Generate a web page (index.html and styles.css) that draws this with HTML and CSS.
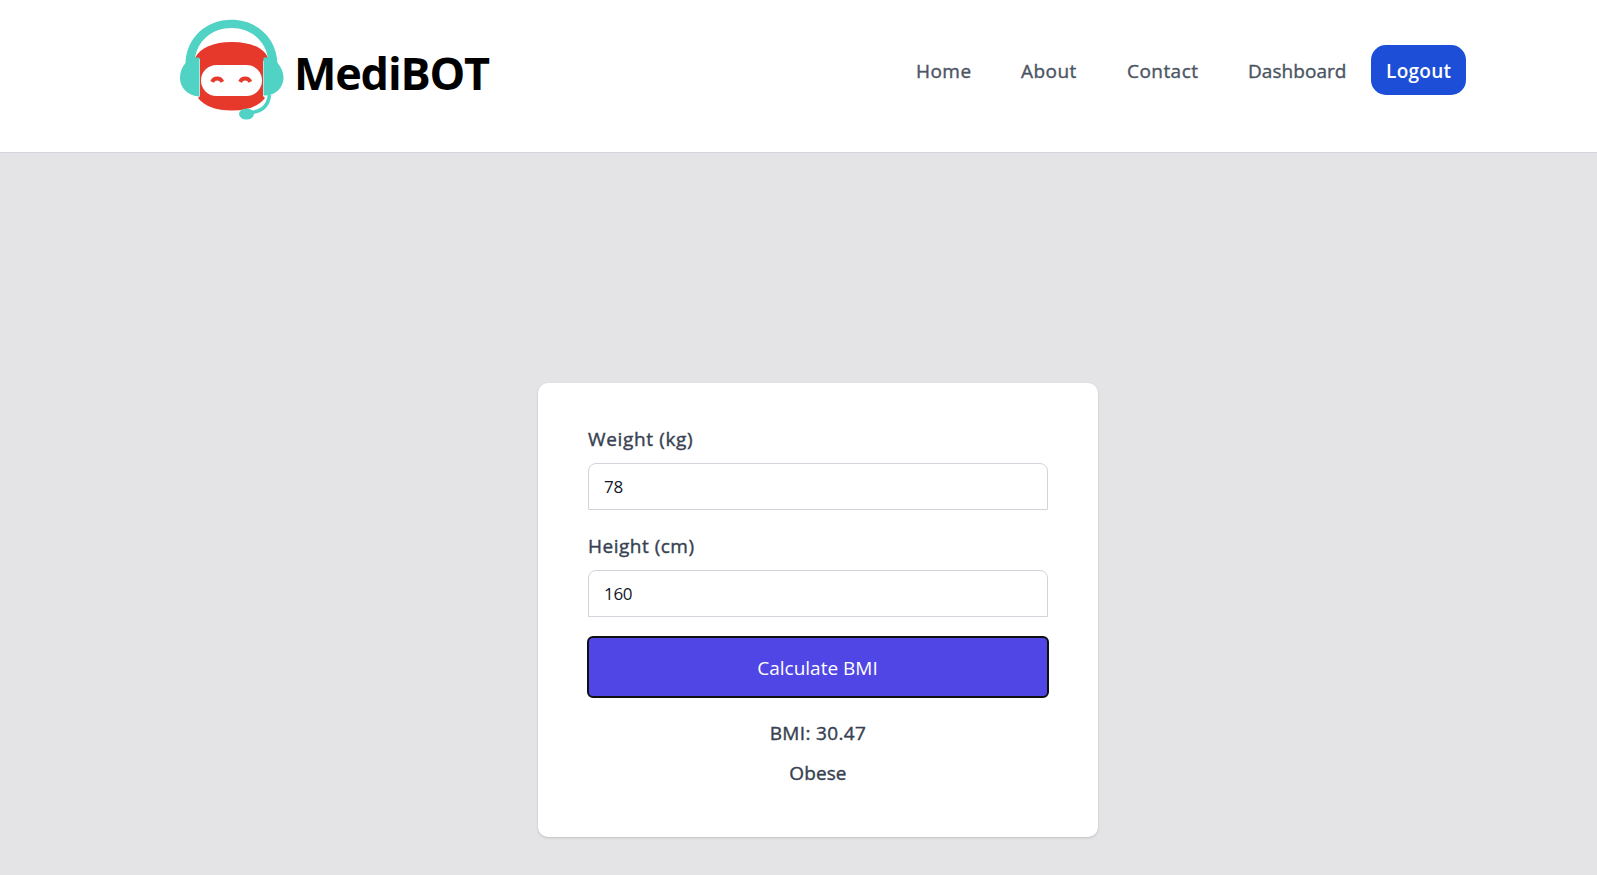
FILE: index.html
```html
<!DOCTYPE html>
<html lang="en">
<head>
<meta charset="utf-8">
<title>MediBOT</title>
<link rel="stylesheet" href="styles.css">
</head>
<body>
<header class="header">
  <a class="brand">
    <svg class="logo" viewBox="0 0 130 120" width="130" height="120" aria-hidden="true">
      <path d="M25 48C30 38 43 32 62 32s32 6 36 16l-5 3v35l2 2C89 96 78 100.500 62 100.500S34 96 28 88l2-2V49z" fill="#e6392c"/>
      <rect x="31" y="55" width="61" height="31" rx="15.500" fill="#fff"/>
      <path d="M42 71.800c2.200-4.400 8.200-4.400 10.400 0M70 71.800c2.200-4.400 8.200-4.400 10.400 0" fill="none" stroke="#e6392c" stroke-width="3.800"/>
      <path d="M15.500 54C16 28 36 9.800 61.500 9.800S107 28 107.500 54L98 49C96 31 81 18 61.500 18S27 31 25 49z" fill="#50d2c4"/>
      <path d="M15.500 53 24 47.500h5.500v39C18 86 10 78 10 68c0-6 2-11 5.500-15zM107.500 53 99 47.500h-5.500v38C105 86 113.500 78 113.500 68c0-6-2.500-11-6-15z" fill="#50d2c4"/>
      <path d="M99.500 85C98 97 91 102 80 102.500" fill="none" stroke="#50d2c4" stroke-width="3.600"/>
      <ellipse cx="76.500" cy="104" rx="7.500" ry="5.500" fill="#50d2c4"/>
    </svg>
    <span class="brand-name">MediBOT</span>
  </a>
  <nav class="nav">
    <a class="link home">Home</a>
    <a class="link about">About</a>
    <a class="link contact">Contact</a>
    <a class="link dashboard">Dashboard</a>
    <a class="logout">Logout</a>
  </nav>
</header>
<main class="main">
  <form class="card">
    <label class="label weight-label" for="weight">Weight (kg)</label>
    <input class="field" id="weight" type="text" value="78">
    <label class="label height-label" for="height">Height (cm)</label>
    <input class="field" id="height" type="text" value="160">
    <button class="calculate" type="button">Calculate BMI</button>
    <p class="result bmi">BMI: 30.47</p>
    <p class="result category">Obese</p>
  </form>
</main>
</body>
</html>
```
FILE: styles.css
```css
* { box-sizing: border-box; }
body {
  margin: 0;
  height: 875px;
  overflow: hidden;
  background: #e4e4e6;
  font: 500 19px/30px "Open Sans", "Noto Sans", sans-serif;
  color: #374151;
}
.header {
  display: flex;
  justify-content: space-between;
  height: 153px;
  padding: 10px 131px 0 170px;
  background: #fff;
  border-bottom: 1px solid #d1d5db;
}
.brand { display: flex; }
.logo { display: block; }
.brand-name {
  margin: 33px 0 0 -6px;
  font-size: 45px;
  font-weight: 700;
  line-height: 60px;
  letter-spacing: -1.2px;
  color: #000;
  white-space: nowrap;
}
.nav {
  display: flex;
  height: 50px;
  margin-top: 35px;
  line-height: 52px;
  color: #4b5563;
  white-space: nowrap;
}
.link {
  margin-right: 50px;
  letter-spacing: .45px;
  -webkit-text-stroke: .4px currentColor;
}
.home { width: 55px; }
.about { width: 56px; }
.contact { width: 71px; }
.dashboard { width: 98px; margin-right: 25px; letter-spacing: .05px; }
.logout {
  width: 95px;
  padding-left: 15px;
  border-radius: 15px;
  background: #1d4ed8;
  color: #fff;
  font-weight: 600;
  letter-spacing: .3px;
}
.main { padding-top: 230px; }
.card {
  display: flex;
  flex-direction: column;
  width: 560px;
  height: 454px;
  margin-left: 538px;
  padding: 41px 50px 0;
  border-radius: 10px;
  background: #fff;
  box-shadow: 0 1px 3px rgba(0, 0, 0, .1), 0 1px 2px rgba(0, 0, 0, .06);
}
.label {
  height: 39px;
  -webkit-text-stroke: .4px currentColor;
}
.weight-label { letter-spacing: .65px; }
.height-label { margin-top: 21px; letter-spacing: .5px; }
.field {
  height: 47px;
  padding: 0 15px;
  border: 1px solid #d1d5db;
  border-radius: 8px 8px 0 0;
  background: #fff;
  color: #111827;
  font: 400 17px/30px "Open Sans", sans-serif;
  letter-spacing: -.3px;
}
.calculate {
  height: 60px;
  margin-top: 20px;
  padding: 2px 1px 0 0;
  border: 0;
  border-radius: 5px;
  outline: 2px solid #101010;
  outline-offset: -1px;
  background: #4f46e5;
  color: #fff;
  font: 400 19px/30px "Open Sans", sans-serif;
}
.result {
  margin: 0;
  text-align: center;
  -webkit-text-stroke: .4px currentColor;
}
.bmi { margin-top: 21px; letter-spacing: .35px; }
.category { margin-top: 10px; letter-spacing: .1px; }
```
